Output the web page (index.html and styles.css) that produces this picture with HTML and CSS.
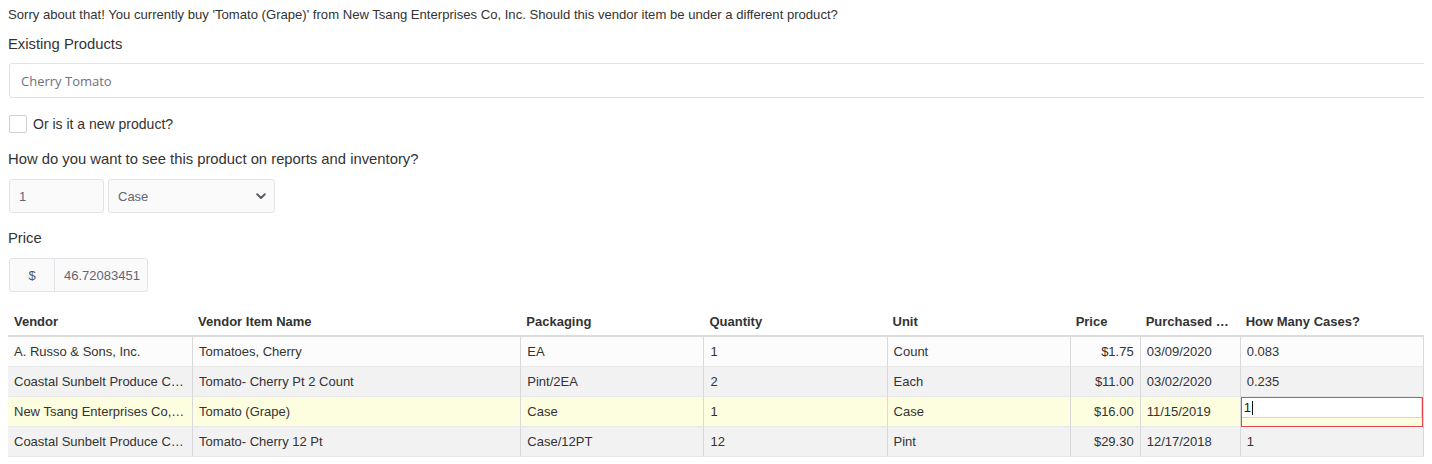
FILE: index.html
```html
<!DOCTYPE html>
<html>
<head>
<meta charset="utf-8">
<link rel="stylesheet" href="styles.css">
</head>
<body>
<div class="page">
  <p class="intro">Sorry about that! You currently buy 'Tomato (Grape)' from New Tsang Enterprises Co, Inc. Should this vendor item be under a different product?</p>

  <div class="label label-first">Existing Products</div>
  <div class="product-input">Cherry Tomato</div>

  <div class="check-row">
    <span class="checkbox"></span>
    <span class="check-label">Or is it a new product?</span>
  </div>

  <div class="label label-how">How do you want to see this product on reports and inventory?</div>
  <div class="unit-row">
    <div class="field qty">1</div>
    <div class="field select">
      <span>Case</span>
      <svg class="chev" width="10" height="7" viewBox="0 0 10 7"><path d="M1.2 1.3 L5 5 L8.8 1.3" fill="none" stroke="#5a5e6a" stroke-width="2" stroke-linecap="round" stroke-linejoin="round"/></svg>
    </div>
  </div>

  <div class="label label-price">Price</div>
  <div class="price-group">
    <div class="addon">$</div>
    <div class="price-value">46.72083451</div>
  </div>

  <table class="grid">
    <colgroup>
      <col class="c-vendor">
      <col class="c-item">
      <col class="c-std">
      <col class="c-std">
      <col class="c-std">
      <col class="c-price">
      <col class="c-date">
      <col class="c-std">
      <col class="c-std">
    </colgroup>
    <thead>
      <tr>
        <th>Vendor</th>
        <th>Vendor Item Name</th>
        <th>Packaging</th>
        <th>Quantity</th>
        <th>Unit</th>
        <th>Price</th>
        <th>Purchased On</th>
        <th>How Many Cases?</th>
        <th>Cost per Case</th>
      </tr>
    </thead>
    <tbody>
      <tr class="r-light">
        <td>A. Russo &amp; Sons, Inc.</td>
        <td>Tomatoes, Cherry</td>
        <td>EA</td>
        <td>1</td>
        <td>Count</td>
        <td class="num">$1.75</td>
        <td>03/09/2020</td>
        <td>0.083</td>
        <td></td>
      </tr>
      <tr class="r-grey">
        <td>Coastal Sunbelt Produce Co., Inc.</td>
        <td>Tomato- Cherry Pt 2 Count</td>
        <td>Pint/2EA</td>
        <td>2</td>
        <td>Each</td>
        <td class="num">$11.00</td>
        <td>03/02/2020</td>
        <td>0.235</td>
        <td></td>
      </tr>
      <tr class="r-current">
        <td>New Tsang Enterprises Co, Inc.</td>
        <td>Tomato (Grape)</td>
        <td>Case</td>
        <td>1</td>
        <td>Case</td>
        <td class="num">$16.00</td>
        <td>11/15/2019</td>
        <td class="editing">
          <div class="editor"><div class="editor-input">1<span class="caret"></span></div></div>
        </td>
        <td></td>
      </tr>
      <tr class="r-grey">
        <td>Coastal Sunbelt Produce Co., Inc.</td>
        <td>Tomato- Cherry 12 Pt</td>
        <td>Case/12PT</td>
        <td>12</td>
        <td>Pint</td>
        <td class="num">$29.30</td>
        <td>12/17/2018</td>
        <td>1</td>
        <td></td>
      </tr>
    </tbody>
  </table>
</div>
</body>
</html>
```

FILE: styles.css
```css
html, body {
  overflow: hidden;
}
body {
  margin: 8px;
  font-family: "Liberation Sans", Arial, sans-serif;
  color: #333;
  background: #fff;
}
.page {
  width: 1560px;
}
.intro {
  margin: 0;
  font-size: 13.1px;
  line-height: 14px;
}
.label {
  font-size: 14.8px;
  line-height: 20px;
  color: #333;
}
.label-first { margin-top: 12px; }
.label-how { margin-top: 16px; }
.label-price { margin-top: 15px; }

.product-input {
  margin-top: 9px;
  margin-left: 1px;
  height: 35px;
  box-sizing: border-box;
  border: 1px solid #e2e2e8;
  border-radius: 3px;
  padding: 0 11px;
  display: flex;
  align-items: center;
  font-family: "Open Sans", sans-serif;
  font-size: 13px;
  color: #70717e;
  background: #fff;
}

.check-row {
  margin-top: 17px;
  margin-left: 1px;
  display: flex;
  align-items: center;
  height: 18px;
}
.checkbox {
  width: 18px;
  height: 18px;
  box-sizing: border-box;
  border: 1px solid #cfcfd4;
  border-radius: 2px;
  background: #fff;
}
.check-label {
  margin-left: 6px;
  font-size: 14px;
  color: #333;
}

.unit-row {
  margin-top: 10px;
  margin-left: 1px;
  display: flex;
  gap: 4px;
}
.field {
  height: 34px;
  box-sizing: border-box;
  border: 1px solid #e2e2e8;
  border-radius: 3px;
  background: #fafafb;
  display: flex;
  align-items: center;
  padding: 0 9px;
  font-size: 13px;
  color: #626672;
}
.qty { width: 95px; }
.select {
  width: 167px;
  justify-content: space-between;
}
.chev { margin-right: -1px; }

.price-group {
  margin-top: 10px;
  margin-left: 1px;
  display: flex;
  width: 139px;
  height: 34px;
  box-sizing: border-box;
  border: 1px solid #e2e2e8;
  border-radius: 3px;
  background: #fafafb;
  font-size: 13px;
  color: #626672;
}
.addon {
  width: 44px;
  border-right: 1px solid #e2e2e8;
  display: flex;
  align-items: center;
  justify-content: center;
  color: #555;
}
.price-value {
  display: flex;
  align-items: center;
  padding-left: 9px;
}

.grid {
  margin-top: 15px;
  border-collapse: separate;
  border-spacing: 0;
  table-layout: fixed;
  width: 1598px;
  font-size: 13px;
}
.c-vendor { width: 184px; }
.c-item { width: 328px; }
.c-std { width: 183px; }
.c-price { width: 70px; }
.c-date { width: 100px; }

.grid th {
  height: 28px;
  padding: 0 6px;
  text-align: left;
  font-weight: bold;
  color: #333;
  border-bottom: 2px solid #dcdcdc;
  white-space: nowrap;
  overflow: hidden;
  text-overflow: ellipsis;
}
.grid td {
  height: 29px;
  box-sizing: content-box;
  padding: 0 6px;
  border-bottom: 1px solid #e8e8e8;
  white-space: nowrap;
  overflow: hidden;
  text-overflow: ellipsis;
  color: #333;
}
.grid td + td {
  border-left: 1px solid #d8d8d8;
}
.grid td.num { text-align: right; }
.r-light td { background: #fcfcfc; }
.r-grey td { background: #f2f2f2; }
.r-current td { background: #fdfee0; }

.grid td.editing {
  padding: 0;
  height: 30px;
  border-bottom: 0;
  vertical-align: top;
}
.editor {
  height: 30px;
  box-sizing: border-box;
  border: 1px solid #e5484d;
}
.editor-input {
  height: 20px;
  box-sizing: border-box;
  background: #fff;
  border: 1px solid #d4d4d4;
  border-top: none;
  border-left: none;
  padding-left: 2px;
  line-height: 19px;
  color: #222;
  display: flex;
  align-items: center;
}
.caret {
  display: inline-block;
  width: 1px;
  height: 14px;
  background: #111;
  margin-left: 1px;
}
```
